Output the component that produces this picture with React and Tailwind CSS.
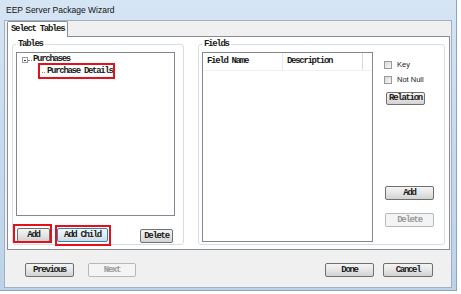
import React from "react";

const MONO = "font-['Liberation_Mono',monospace] font-bold text-[9px] tracking-[-1.3px] text-[#1a1a1a]";

function Btn({ label, size, disabled, focus }) {
  let look =
    "border-[#707070] bg-linear-to-b from-[#f4f4f4] via-[#e6e6e6] to-[#d2d2d2] text-[#1a1a1a]";
  if (disabled) look = "border-[#b5b9bc] bg-[#f4f4f4] text-[#9a9a9a]";
  if (focus)
    look = "border-[#3c7fb1] bg-linear-to-b from-[#f2f7fb] via-[#e3ecf4] to-[#cfdbe6] text-[#1a1a1a]";
  return (
    <div
      className={`${size} ${look} border rounded-[2px] pt-px flex items-center justify-center shrink-0 font-['Liberation_Mono',monospace] font-bold text-[9px] tracking-[-1.3px]`}
    >
      {label}
    </div>
  );
}

function Check({ label, className }) {
  return (
    <div className={`flex items-center h-[8px] ${className}`}>
      <div className="w-[8px] h-[8px] border border-[#9a9a9a] bg-linear-to-br from-[#d9d9d9] to-[#f7f7f7]" />
      <span className="ml-[5px] font-['Liberation_Sans',sans-serif] text-[7.5px] text-[#222]">
        {label}
      </span>
    </div>
  );
}

function GroupBox({ title, size, children }) {
  return (
    <div className={`${size} relative border border-[#d5dfe5] rounded-[3px] shrink-0`}>
      <span className={`absolute -top-[6px] left-[3px] bg-white px-[2px] leading-[10px] ${MONO}`}>
        {title}
      </span>
      {children}
    </div>
  );
}

export default function App() {
  return (
    <div className="w-[461px] h-[294px] bg-white relative overflow-hidden">
      {/* Window */}
      <div className="w-[457px] h-[291px] flex flex-col bg-linear-to-b from-[#d6e5f4] via-[#c6daee] to-[#bcd3ea] border-r border-b border-[#8ca3bb]">
        {/* Title bar */}
        <div className="h-[20px] pl-[6px] flex items-center shrink-0">
          <span className="font-['Liberation_Sans',sans-serif] text-[8.5px] text-[#111]">
            EEP Server Package Wizard
          </span>
        </div>

        {/* Client area */}
        <div className="flex-1 ml-[4px] mr-[4px] mb-[2px] bg-[#f0f0f0] border border-[#9fb1c4] flex flex-col">
          {/* Tab control */}
          <div className="ml-[2px] w-[443px] flex flex-col">
            <div className="h-[15px] flex items-end">
              <div className="relative z-10 -mb-px w-[61px] h-[16px] bg-white border border-b-0 border-[#898c95] rounded-t-[2px] pl-[3px] flex items-center">
                <span className={MONO}>Select Tables</span>
              </div>
            </div>
            <div className="h-[214px] border border-[#898c95] bg-white flex px-[4px] pt-[7px]">
              {/* Tables */}
              <GroupBox title="Tables" size="w-[172px] h-[201px]">
                <div className="pl-[3px] pt-[7px] flex flex-col">
                  <div className="w-[159px] h-[164px] border border-[#828790] bg-white pt-[2px]">
                    <div className="h-[10px] pl-[5px] flex items-center">
                      <div className="w-[6px] h-[6px] border border-[#9a9a9a] flex items-center justify-center">
                        <div className="w-[2px] h-px bg-[#333]" />
                      </div>
                      <div className="w-[4px] border-t border-dotted border-[#888]" />
                      <span className={`ml-[1px] ${MONO}`}>Purchases</span>
                    </div>
                    <div className="h-[13px] pl-[25px] pt-px flex items-center">
                      <div className="w-[3px] border-t border-dotted border-[#888]" />
                      <span className={`ml-[2px] ${MONO}`}>Purchase Details</span>
                    </div>
                  </div>
                  <div className="mt-[12px] flex">
                    <div className="ml-px">
                      <Btn label="Add" size="w-[33px] h-[14px]" />
                    </div>
                    <div className="ml-[7px]">
                      <Btn label="Add Child" size="w-[51px] h-[14px]" focus />
                    </div>
                    <div className="ml-[32px] mt-px">
                      <Btn label="Delete" size="w-[33px] h-[14px]" />
                    </div>
                  </div>
                </div>
              </GroupBox>

              {/* Fields */}
              <div className="ml-[14px]">
                <GroupBox title="Fields" size="w-[247px] h-[201px]">
                  <div className="pl-[3px] pt-[7px] flex">
                    <div className="w-[171px] h-[190px] border border-[#828790] bg-white shrink-0">
                      <div className="h-[18px] flex border-b border-[#f0f0f0]">
                        <div className={`w-[80px] pl-[4px] flex items-center border-r border-[#e8e8e8] ${MONO}`}>
                          Field Name
                        </div>
                        <div className={`w-[80px] pl-[4px] flex items-center border-r border-[#dcdcdc] ${MONO}`}>
                          Description
                        </div>
                      </div>
                    </div>
                    <div className="ml-[11px] pt-[9px] flex flex-col">
                      <Check label="Key" />
                      <Check label="Not Null" className="mt-[7px]" />
                      <div className="mt-[8px] ml-[2px]">
                        <Btn label="Relation" size="w-[39px] h-[13px]" />
                      </div>
                      <div className="mt-[81px] ml-px">
                        <Btn label="Add" size="w-[49px] h-[14px]" />
                      </div>
                      <div className="mt-[13px] ml-px">
                        <Btn label="Delete" size="w-[49px] h-[14px]" disabled />
                      </div>
                    </div>
                  </div>
                </GroupBox>
              </div>
            </div>
          </div>

          {/* Bottom buttons */}
          <div className="mt-[13px] flex pl-[20px] pr-[18px]">
            <Btn label="Previous" size="w-[49px] h-[14px]" />
            <div className="ml-[14px]">
              <Btn label="Next" size="w-[48px] h-[14px]" disabled />
            </div>
            <div className="ml-auto">
              <Btn label="Done" size="w-[49px] h-[14px]" />
            </div>
            <div className="ml-[9px]">
              <Btn label="Cancel" size="w-[50px] h-[14px]" />
            </div>
          </div>
        </div>
      </div>

      {/* Red highlight frames */}
      <div className="absolute left-[38px] top-[63px] w-[77px] h-[16px] border-2 border-[#e2111b]" />
      <div className="absolute left-[13px] top-[224px] w-[39px] h-[19px] border-2 border-[#e2111b]" />
      <div className="absolute left-[55px] top-[225px] w-[56px] h-[21px] border-2 border-[#e2111b]" />
    </div>
  );
}
